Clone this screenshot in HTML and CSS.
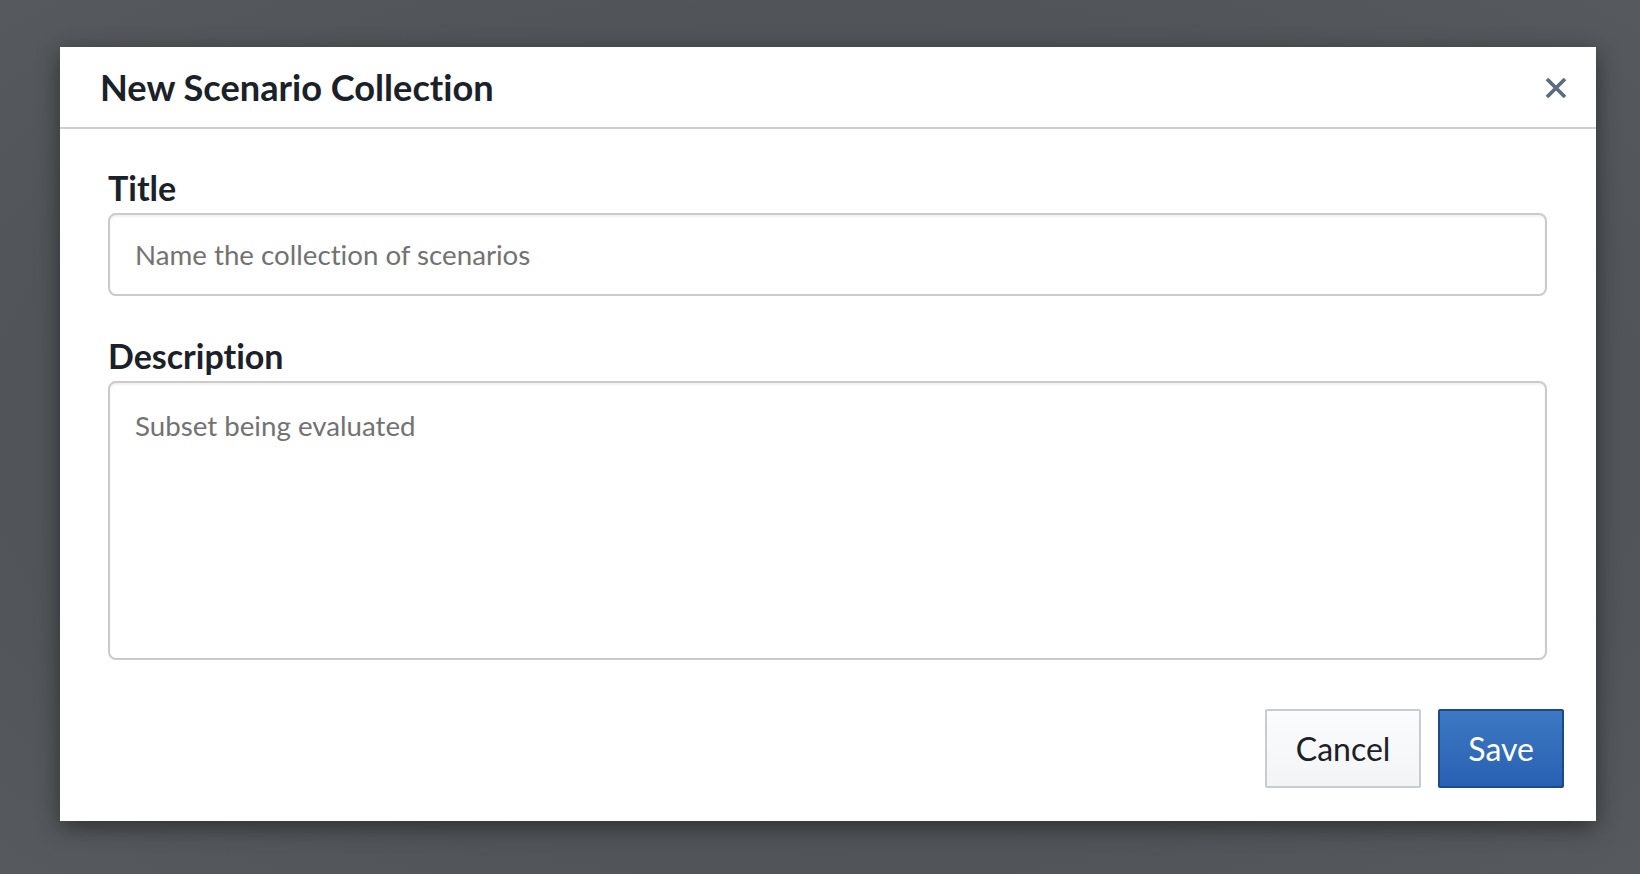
FILE: index.html
```html
<!DOCTYPE html>
<html lang="en">
<head>
<meta charset="utf-8">
<title>New Scenario Collection</title>
<link rel="stylesheet" href="styles.css">
</head>
<body>
<div class="backdrop">
  <div class="modal">
    <div class="modal-header">
      <h1 class="modal-title">New Scenario Collection</h1>
      <button class="close" aria-label="Close">
        <svg width="22" height="22" viewBox="0 0 22 22"><path d="M2 2 L20 20 M20 2 L2 20" stroke="#5b6d7d" stroke-width="3.8" stroke-linecap="butt" fill="none"/></svg>
      </button>
    </div>
    <div class="modal-body">
      <div class="group">
        <label class="label">Title</label>
        <input class="field" type="text" placeholder="Name the collection of scenarios">
      </div>
      <div class="group group-desc">
        <label class="label">Description</label>
        <textarea class="field area" placeholder="Subset being evaluated"></textarea>
      </div>
    </div>
    <div class="modal-footer">
      <button class="btn btn-cancel">Cancel</button>
      <button class="btn btn-save">Save</button>
    </div>
  </div>
</div>
</body>
</html>
```
FILE: styles.css
```css
html, body {
  margin: 0;
  padding: 0;
  height: 100%;
}
body {
  background: #505458;
  font-family: Lato, "Open Sans", sans-serif;
  font-variant-ligatures: none;
  overflow: hidden;
}
.backdrop {
  padding: 47px 0 0 60px;
  height: 100%;
  box-sizing: border-box;
  background: radial-gradient(ellipse at 50% 50%, #4e5256 0%, #515559 70%, #56595d 100%);
}
.modal {
  width: 1536px;
  height: 774px;
  background: #fff;
  box-shadow: 0 6px 22px rgba(0, 0, 0, 0.45);
  display: flex;
  flex-direction: column;
  box-sizing: border-box;
}
.modal-header {
  height: 82px;
  box-sizing: border-box;
  border-bottom: 2px solid #cdced1;
  display: flex;
  align-items: center;
  justify-content: space-between;
  padding: 0 29px 0 40px;
}
.modal-title {
  margin: 0;
  font-size: 36.2px;
  font-weight: 700;
  color: #1a2129;
  line-height: 44px;
}
.close {
  border: 0;
  background: none;
  padding: 0;
  width: 22px;
  height: 22px;
  display: flex;
  margin-top: 1px;
}
.modal-body {
  padding: 42px 49px 0 48px;
}
.group {
  display: flex;
  flex-direction: column;
}
.group-desc {
  margin-top: 43px;
}
.label {
  font-size: 34px;
  font-weight: 700;
  line-height: 34px;
  color: #1a2129;
  margin-bottom: 8px;
}
.field {
  font-family: Lato, "Open Sans", sans-serif;
  font-variant-ligatures: none;
  font-size: 27.7px;
  color: #1a2129;
  height: 83px;
  box-sizing: border-box;
  border: 2px solid #cacaca;
  border-radius: 8px;
  padding: 0 25px;
  box-shadow: inset 0 2px 2px rgba(0, 0, 0, 0.05);
  outline: none;
  margin: 0;
  width: 100%;
}
.field::placeholder {
  color: #727272;
  opacity: 1;
}
.area {
  height: 279px;
  padding: 20px 25px;
  line-height: 45px;
  resize: none;
  display: block;
}
.modal-footer {
  display: flex;
  justify-content: flex-end;
  gap: 17px;
  padding: 49px 32px 33px;
}
.btn {
  font-family: Lato, "Open Sans", sans-serif;
  font-variant-ligatures: none;
  font-size: 32px;
  height: 79px;
  padding: 0 29px;
  border-radius: 2px;
  box-sizing: border-box;
  cursor: pointer;
}
.btn-cancel {
  background: linear-gradient(#fbfcfd, #f2f4f6);
  border: 2px solid #c8ccd0;
  color: #1a2129;
}
.btn-save {
  background: linear-gradient(#3c78c3, #2961b2);
  border: 2px solid #1d4a86;
  color: #fff;
  padding: 0 28px;
}
```
